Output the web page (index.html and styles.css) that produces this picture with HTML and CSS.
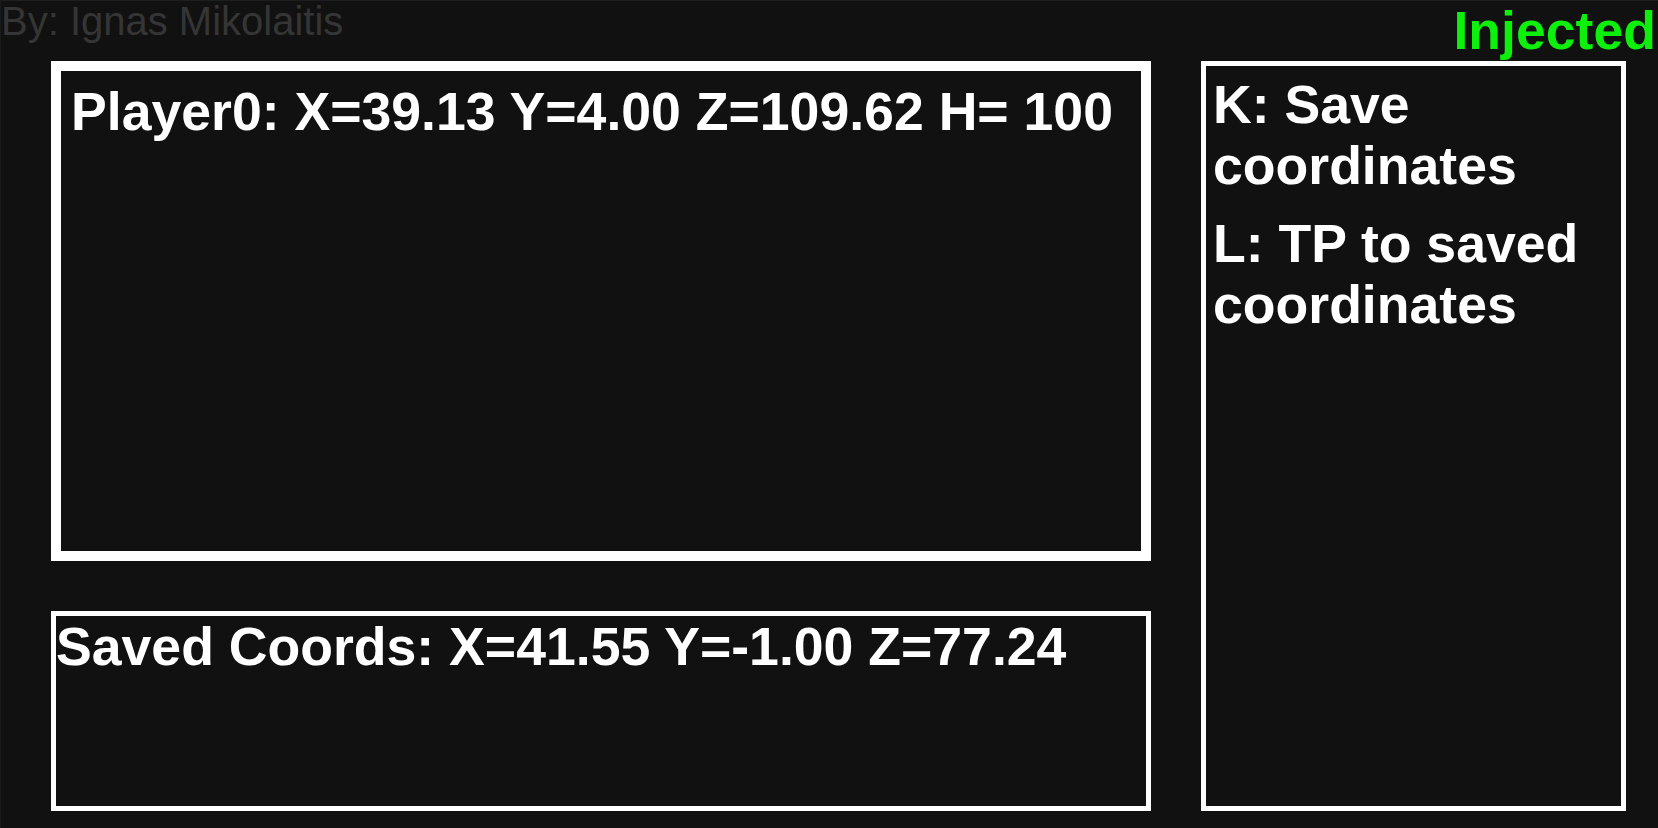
FILE: index.html
```html
<!DOCTYPE html>
<html lang="en">
<head>
<meta charset="utf-8">
<title>Overlay</title>
<link rel="stylesheet" href="styles.css">
</head>
<body>
<div class="page">
  <header class="topbar">
    <div class="author">By: Ignas Mikolaitis</div>
    <div class="status">Injected</div>
  </header>
  <main class="layout">
    <section class="left-col">
      <div class="panel panel-player">Player0: X=39.13 Y=4.00 Z=109.62 H= 100</div>
      <div class="panel panel-saved">Saved Coords: X=41.55 Y=-1.00 Z=77.24</div>
    </section>
    <aside class="panel panel-keys">
      <p class="key-line">K: Save coordinates</p>
      <p class="key-line">L: TP to saved coordinates</p>
    </aside>
  </main>
</div>
</body>
</html>
```

FILE: styles.css
```css
html, body {
  margin: 0;
  padding: 0;
  background: #111111;
}

.page {
  width: 1658px;
  height: 828px;
  box-sizing: border-box;
  border-top: 1px solid #1e1e1e;
  border-left: 1px solid #1a1a1a;
  background: #111111;
  font-family: "Liberation Sans", Arial, sans-serif;
  overflow: hidden;
}

.topbar {
  display: flex;
  justify-content: space-between;
  align-items: flex-start;
  height: 60px;
}

.author {
  font-size: 40px;
  line-height: 42px;
  color: #353535;
  margin-top: -1px;
}

.status {
  font-size: 53.6px;
  font-weight: bold;
  line-height: 61px;
  color: #0cf00c;
  padding-right: 2px;
  margin-top: -1px;
}

.layout {
  display: flex;
  gap: 50px;
  padding-left: 50px;
}

.left-col {
  display: flex;
  flex-direction: column;
  gap: 50px;
  width: 1100px;
}

.panel {
  box-sizing: border-box;
  border-style: solid;
  border-color: #ffffff;
  color: #ffffff;
  font-size: 53.6px;
  font-weight: bold;
  line-height: 61.3px;
  background: #111111;
}

.panel-player {
  height: 500px;
  border-width: 10px;
  padding: 10px;
}

.panel-saved {
  height: 200px;
  border-width: 5px;
  padding: 0;
}

.panel-keys {
  width: 425px;
  height: 750px;
  border-width: 5px;
  padding: 8px 7px;
}

.key-line {
  margin: 0 0 16px 0;
}
```
